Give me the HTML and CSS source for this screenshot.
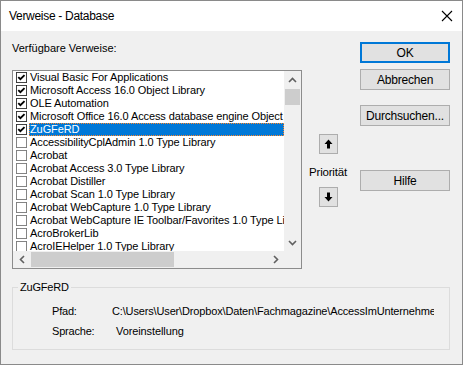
FILE: index.html
```html
<!DOCTYPE html>
<html lang="de">
<head>
<meta charset="utf-8">
<title>Verweise - Database</title>
<link rel="stylesheet" href="styles.css">
</head>
<body>
<div class="window">
  <div class="titlebar">
    <span class="title">Verweise - Database</span>
    <svg class="close" width="12" height="12" viewBox="0 0 12 12"><path d="M1 1 L11 11 M11 1 L1 11" stroke="#000" stroke-width="1.1" fill="none"/></svg>
  </div>
  <div class="content">
    <div class="top">
      <div class="left">
        <div class="label">Verfügbare Verweise:</div>
        <div class="listbox">
          <div class="items">
            <div class="row"><svg class="cb" width="12" height="12" viewBox="0 0 12 12"><rect x="0.5" y="0.5" width="11" height="11" fill="#fff" stroke="#333"/><path d="M2.5 5.5 L4.8 7.8 L9.3 3.3" stroke="#000" stroke-width="2" fill="none"/></svg><span class="txt">Visual Basic For Applications</span></div>
            <div class="row"><svg class="cb" width="12" height="12" viewBox="0 0 12 12"><rect x="0.5" y="0.5" width="11" height="11" fill="#fff" stroke="#333"/><path d="M2.5 5.5 L4.8 7.8 L9.3 3.3" stroke="#000" stroke-width="2" fill="none"/></svg><span class="txt">Microsoft Access 16.0 Object Library</span></div>
            <div class="row"><svg class="cb" width="12" height="12" viewBox="0 0 12 12"><rect x="0.5" y="0.5" width="11" height="11" fill="#fff" stroke="#333"/><path d="M2.5 5.5 L4.8 7.8 L9.3 3.3" stroke="#000" stroke-width="2" fill="none"/></svg><span class="txt">OLE Automation</span></div>
            <div class="row"><svg class="cb" width="12" height="12" viewBox="0 0 12 12"><rect x="0.5" y="0.5" width="11" height="11" fill="#fff" stroke="#333"/><path d="M2.5 5.5 L4.8 7.8 L9.3 3.3" stroke="#000" stroke-width="2" fill="none"/></svg><span class="txt">Microsoft Office 16.0 Access database engine Object Library</span></div>
            <div class="row"><svg class="cb" width="12" height="12" viewBox="0 0 12 12"><rect x="0.5" y="0.5" width="11" height="11" fill="#fff" stroke="#333"/><path d="M2.5 5.5 L4.8 7.8 L9.3 3.3" stroke="#000" stroke-width="2" fill="none"/></svg><span class="txt selected">ZuGFeRD</span></div>
            <div class="row"><svg class="cb" width="12" height="12" viewBox="0 0 12 12"><rect x="0.5" y="0.5" width="11" height="11" fill="#fff" stroke="#7a7a7a"/></svg><span class="txt">AccessibilityCplAdmin 1.0 Type Library</span></div>
            <div class="row"><svg class="cb" width="12" height="12" viewBox="0 0 12 12"><rect x="0.5" y="0.5" width="11" height="11" fill="#fff" stroke="#7a7a7a"/></svg><span class="txt">Acrobat</span></div>
            <div class="row"><svg class="cb" width="12" height="12" viewBox="0 0 12 12"><rect x="0.5" y="0.5" width="11" height="11" fill="#fff" stroke="#7a7a7a"/></svg><span class="txt">Acrobat Access 3.0 Type Library</span></div>
            <div class="row"><svg class="cb" width="12" height="12" viewBox="0 0 12 12"><rect x="0.5" y="0.5" width="11" height="11" fill="#fff" stroke="#7a7a7a"/></svg><span class="txt">Acrobat Distiller</span></div>
            <div class="row"><svg class="cb" width="12" height="12" viewBox="0 0 12 12"><rect x="0.5" y="0.5" width="11" height="11" fill="#fff" stroke="#7a7a7a"/></svg><span class="txt">Acrobat Scan 1.0 Type Library</span></div>
            <div class="row"><svg class="cb" width="12" height="12" viewBox="0 0 12 12"><rect x="0.5" y="0.5" width="11" height="11" fill="#fff" stroke="#7a7a7a"/></svg><span class="txt">Acrobat WebCapture 1.0 Type Library</span></div>
            <div class="row"><svg class="cb" width="12" height="12" viewBox="0 0 12 12"><rect x="0.5" y="0.5" width="11" height="11" fill="#fff" stroke="#7a7a7a"/></svg><span class="txt">Acrobat WebCapture IE Toolbar/Favorites 1.0 Type Library</span></div>
            <div class="row"><svg class="cb" width="12" height="12" viewBox="0 0 12 12"><rect x="0.5" y="0.5" width="11" height="11" fill="#fff" stroke="#7a7a7a"/></svg><span class="txt">AcroBrokerLib</span></div>
            <div class="row"><svg class="cb" width="12" height="12" viewBox="0 0 12 12"><rect x="0.5" y="0.5" width="11" height="11" fill="#fff" stroke="#7a7a7a"/></svg><span class="txt">AcroIEHelper 1.0 Type Library</span></div>
          </div>
          <div class="vscroll">
            <div class="sbtn"><svg width="9" height="6" viewBox="0 0 9 6"><path d="M1 5 L4.5 1.5 L8 5" stroke="#606060" stroke-width="1.6" fill="none"/></svg></div>
            <div class="vthumb"></div>
            <div class="vtrack"></div>
            <div class="sbtn"><svg width="9" height="6" viewBox="0 0 9 6"><path d="M1 1 L4.5 4.5 L8 1" stroke="#606060" stroke-width="1.6" fill="none"/></svg></div>
          </div>
          <div class="hscroll">
            <div class="sbtn"><svg width="6" height="9" viewBox="0 0 6 9"><path d="M5 1 L1.5 4.5 L5 8" stroke="#606060" stroke-width="1.6" fill="none"/></svg></div>
            <div class="hthumb"></div>
            <div class="htrack"></div>
            <div class="sbtn"><svg width="6" height="9" viewBox="0 0 6 9"><path d="M1 1 L4.5 4.5 L1 8" stroke="#606060" stroke-width="1.6" fill="none"/></svg></div>
          </div>
          <div class="corner"></div>
        </div>
      </div>
      <div class="prio">
        <div class="arrowbtn"><svg width="9" height="10" viewBox="0 0 9 10"><path d="M4.5 0.5 L8.5 5 L6 5 L6 9.5 L3 9.5 L3 5 L0.5 5 Z" fill="#000"/></svg></div>
        <div class="priolabel">Priorität</div>
        <div class="arrowbtn"><svg width="9" height="10" viewBox="0 0 9 10"><path d="M4.5 9.5 L8.5 5 L6 5 L6 0.5 L3 0.5 L3 5 L0.5 5 Z" fill="#000"/></svg></div>
      </div>
      <div class="buttons">
        <div class="btn default">OK</div>
        <div class="btn gap6">Abbrechen</div>
        <div class="btn gap15">Durchsuchen...</div>
        <div class="btn gap44">Hilfe</div>
      </div>
    </div>
    <div class="group">
      <span class="legend">ZuGFeRD</span>
      <div class="info">
        <span class="key">Pfad:</span><span class="val">C:\Users\User\Dropbox\Daten\Fachmagazine\AccessImUnternehmen\2019\ZuGFeRD.accdb</span>
        <span class="key">Sprache:</span><span class="val lang">Voreinstellung</span>
      </div>
    </div>
  </div>
</div>
</body>
</html>
```
FILE: styles.css
```css
* { box-sizing: border-box; }
html, body { margin: 0; padding: 0; background: #f0f0f0; }
.window {
  width: 463px; height: 365px;
  border: 1px solid #8a8a8a;
  background: #f0f0f0;
  font-family: "Liberation Sans", Arial, sans-serif;
  font-size: 11px;
  color: #000;
  overflow: hidden;
}
.titlebar {
  height: 30px; background: #fff;
  display: flex; align-items: center; justify-content: space-between;
  padding: 0 9px 0 8px;
}
.title { font-size: 12px; letter-spacing: -0.3px; }
.close { display: block; }
.content { height: 333px; }
.top { display: flex; align-items: flex-start; }
.left { margin-left: 11px; padding-top: 10px; width: 290px; }
.label { line-height: 14px; height: 14px; letter-spacing: 0; }
.listbox {
  margin-top: 15px;
  width: 290px; height: 199px;
  border: 1px solid #8c8c8c;
  display: grid;
  grid-template-columns: 271px 17px;
  grid-template-rows: 180px 17px;
  background: #fff;
}
.items { overflow: hidden; background: #fff; }
.row { height: 13px; display: flex; align-items: center; white-space: nowrap; }
.cb { display: block; flex: none; margin-left: 3px; width: 11px; height: 11px; }
.txt { flex: 1 0 auto; margin-left: 2px; padding-left: 1px; line-height: 13px; height: 13px; letter-spacing: -0.1px; }
.txt.selected { background: #0078d7; color: #fff; outline: 1px dotted #ff8728; outline-offset: -1px; }
.vscroll { background: #f0f0f0; display: flex; flex-direction: column; }
.sbtn { flex: none; width: 17px; height: 17px; display: flex; align-items: center; justify-content: center; }
.sbtn svg { display: block; }
.vthumb { flex: none; height: 16px; margin: 1px 1px 0 1px; background: #cdcdcd; }
.vtrack { flex: 1; }
.hscroll { background: #f0f0f0; display: flex; flex-direction: row; }
.hthumb { flex: none; width: 143px; margin: 1px 0 1px 1px; background: #cdcdcd; }
.htrack { flex: 1; }
.corner { background: #f0f0f0; }
.prio { width: 50px; margin-left: 1px; padding-top: 103px; display: flex; flex-direction: column; align-items: center; }
.arrowbtn {
  width: 19px; height: 20px;
  background: #e1e1e1; border: 1px solid #adadad;
  display: flex; align-items: center; justify-content: center;
}
.arrowbtn svg { display: block; }
.priolabel { margin-top: 11px; margin-bottom: 8px; line-height: 14px; height: 14px; font-size: 11.5px; letter-spacing: -0.2px; }
.buttons { margin-left: 7px; padding-top: 11px; width: 90px; display: flex; flex-direction: column; }
.btn {
  height: 21px; background: #e1e1e1; border: 1px solid #adadad;
  display: flex; align-items: center; justify-content: center;
  font-size: 12px; letter-spacing: -0.2px;
}
.btn.default { border: 2px solid #0078d7; }
.gap6 { margin-top: 6px; }
.gap15 { margin-top: 15px; }
.gap44 { margin-top: 44px; }
.group {
  margin: 18px 0 0 11px;
  width: 438px; height: 63px;
  border: 1px solid #dcdcdc;
}
.legend {
  display: block; width: max-content;
  margin: -8px 0 0 5px; padding: 0 2px;
  background: #f0f0f0; line-height: 14px; height: 14px;
  letter-spacing: -0.2px;
}
.info {
  margin-top: 10px; padding-left: 39px;
  display: grid; grid-template-columns: 60px 322px;
  row-gap: 6px; line-height: 14px;
}
.key { letter-spacing: -0.2px; }
.val { white-space: nowrap; overflow: hidden; letter-spacing: -0.15px; }
.val.lang { padding-left: 4px; letter-spacing: -0.1px; }
```
